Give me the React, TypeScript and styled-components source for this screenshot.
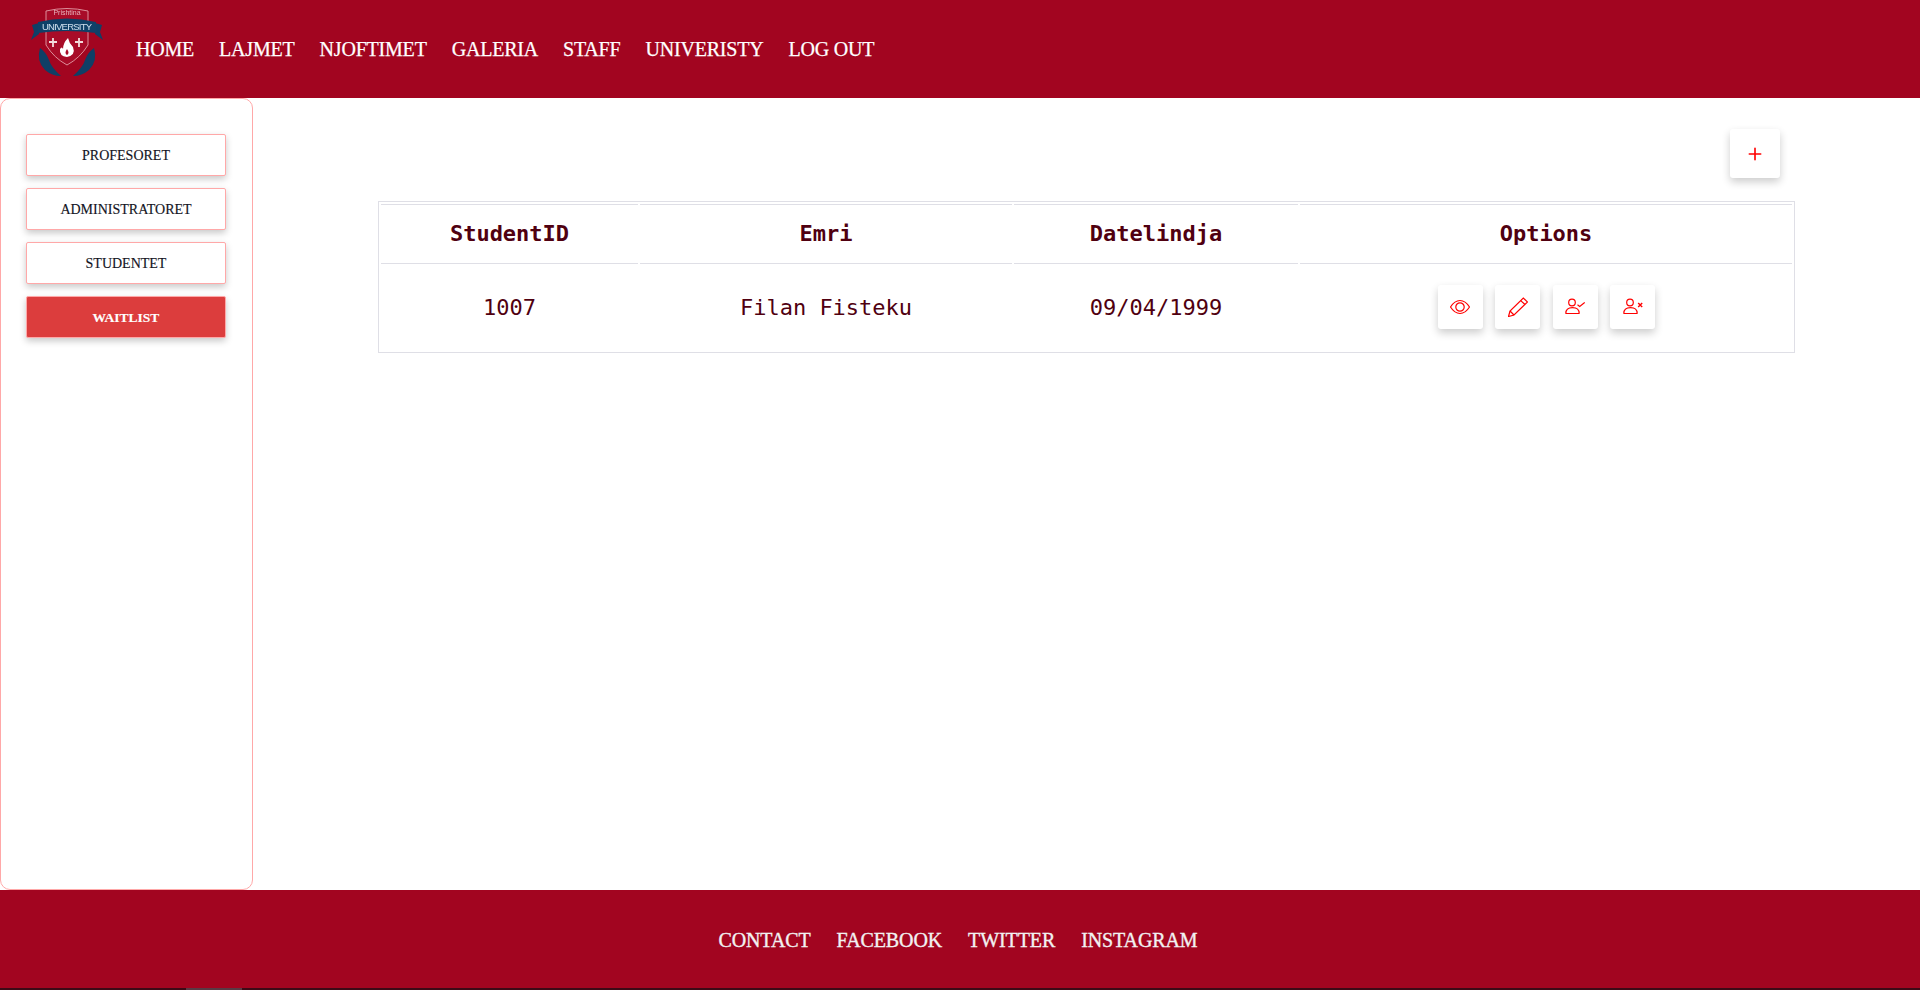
import * as React from 'react'

import styled, { createGlobalStyle } from 'styled-components'
import { BsPlus } from 'react-icons/bs'

const GlobalStyle = createGlobalStyle`
  html, body {
    margin: 0;
    padding: 0;
    height: 100%;
    background: #fff;
    overflow: hidden;
  }
`

const Page = styled.div`
  width: 1920px;
  height: 990px;
  display: flex;
  flex-direction: column;
  font-family: 'Liberation Serif', serif;
`

const Header = styled.header`
  height: 98px;
  background: #a20520;
  display: flex;
  align-items: center;
  padding-left: 28px;
`

const Logo = styled.svg`
  width: 76px;
  height: 78px;
  margin-right: 32px;
  margin-top: -10px;
  flex: none;
  filter: blur(0.3px);
`

const Nav = styled.nav`
  display: flex;
  gap: 25px;
`

const NavLink = styled.a`
  color: #fff;
  font-size: 20px;
  line-height: 30px;
  letter-spacing: -0.2px;
  white-space: nowrap;
  -webkit-text-stroke: 0.25px currentColor;
`

const Middle = styled.div`
  height: 792px;
  display: flex;
`

const Sidebar = styled.aside`
  width: 253px;
  box-sizing: border-box;
  flex: none;
  border: 1px solid #ffa8a8;
  border-radius: 10px;
  padding: 35px 25px 0;
  display: flex;
  flex-direction: column;
  gap: 12px;
`

const SideButton = styled.button<{ $active?: boolean }>`
  width: 200px;
  height: 42px;
  box-sizing: border-box;
  border: 1px solid #ffa8a8;
  border-radius: 2px;
  background: ${p => (p.$active ? '#dc3d3d' : '#fff')};
  color: ${p => (p.$active ? '#fff' : '#14141e')};
  font-family: inherit;
  font-size: ${p => (p.$active ? 13.5 : 14)}px;
  font-weight: ${p => (p.$active ? 700 : 400)};
  box-shadow: 0 3px 7px rgba(0, 0, 0, 0.22);
  padding: 2px 0 0;
  -webkit-text-stroke: 0.15px currentColor;
`

const Main = styled.main`
  flex: 1;
  padding: 31px 125px 0;
`

const Toolbar = styled.div`
  display: flex;
  justify-content: flex-end;
  padding-right: 15px;
  margin-bottom: 23px;
`

const IconButton = styled.button<{ $large?: boolean }>`
  width: ${p => (p.$large ? 50 : 45)}px;
  height: ${p => (p.$large ? 49 : 44)}px;
  border: 0;
  border-radius: 3px;
  background: #fff;
  color: #ff0000;
  display: flex;
  align-items: center;
  justify-content: center;
  padding: 0;
  box-shadow: 0 4px 9px rgba(0, 0, 0, 0.2);
`

const Table = styled.table`
  width: 100%;
  table-layout: fixed;
  border: 1px solid #dfdfe6;
  border-collapse: separate;
  border-spacing: 2px;
  font-family: 'DejaVu Sans Mono', monospace;
  font-size: 22px;
  color: #500010;
`

const HeadCell = styled.th`
  height: 60px;
  box-sizing: border-box;
  padding: 0 0 2px;
  border-top: 1px solid #dfdfe6;
  border-bottom: 1px solid #dfdfe6;
  text-align: center;
  font-weight: 700;
`

const Cell = styled.td`
  height: 84px;
  box-sizing: border-box;
  padding: 0 0 2px;
  text-align: center;
`

const Actions = styled.div`
  display: flex;
  justify-content: center;
  gap: 12.5px;
  margin-left: 1px;
`

const Footer = styled.footer`
  height: 98px;
  background: #a20520;
  display: flex;
  justify-content: center;
  gap: 26px;
  padding: 35px 4px 0 0;
  box-sizing: border-box;
`

const FooterLink = styled(NavLink)`
  color: #f2f2f2;
  letter-spacing: -0.1px;
  -webkit-text-stroke: 0.35px currentColor;
`

const Strip = styled.div`
  height: 2px;
  background: #3d0a16;
  padding-left: 186px;
`

const StripThumb = styled.div`
  width: 56px;
  height: 2px;
  background: #5a3a44;
`

const LineIcon = styled.svg`
  width: 20px;
  height: 20px;
  fill: none;
  stroke: currentColor;
  stroke-width: 1.2;
`

const navItems = ['HOME', 'LAJMET', 'NJOFTIMET', 'GALERIA', 'STAFF', 'UNIVERISTY', 'LOG OUT']
const footerItems = ['CONTACT', 'FACEBOOK', 'TWITTER', 'INSTAGRAM']
const sideItems = ['PROFESORET', 'ADMINISTRATORET', 'STUDENTET', 'WAITLIST']

function UniversityLogo() {
  return (
    <Logo viewBox="0 0 76 78">
      <path d="M18 6 Q39 1 60 6 L60 40 Q52 53 39 60 Q26 53 18 40 Z" fill="#a80c28" stroke="#dc8f9a" strokeWidth="1" />
      <text x="39" y="10" textAnchor="middle" fontFamily="Liberation Sans, sans-serif" fontSize="7" fill="#e8b4bc">
        Prishtina
      </text>
      <path d="M4 20 L11 18 L11 29 L3 35 L6 27 Z" fill="#0f3f66" />
      <path d="M74 20 L67 18 L67 29 L75 35 L72 27 Z" fill="#0f3f66" />
      <path d="M10 17 Q39 10 68 17 L68 28 Q39 24 10 28 Z" fill="#0f4168" />
      <text x="39" y="24.5" textAnchor="middle" fontFamily="Liberation Sans, sans-serif" fontSize="9.5" textLength="50" fill="#cfe0ee">
        UNIVERSITY
      </text>
      <path d="M25 33 v9 M21 37 h8 M51 33 v9 M47 37 h8" stroke="#f3dcdc" strokeWidth="1.8" />
      <path d="M40 33 Q41 38 45 42 Q48 50 39 52 Q31 51 32 44 Q34 41 35 44 Q35 38 40 33 Z M39 44 Q36 48 39 50 Q42 48 39 44 Z" fill="#fff" fillRule="evenodd" />
      <path d="M12 43 Q8 56 17 65 Q24 71 33 71 Q23 62 21 55 Q18 47 12 43 Z" fill="#0f3f66" />
      <path d="M66 43 Q70 56 61 65 Q54 71 45 71 Q55 62 57 55 Q60 47 66 43 Z" fill="#0f3f66" />
    </Logo>
  )
}

function EyeIcon() {
  return (
    <LineIcon viewBox="0 0 20 20">
      <path d="M.5 10 C4 4.5 7 3.5 10 3.5 S16 4.5 19.5 10 C16 15.5 13 16.5 10 16.5 S4 15.5 .5 10 Z" />
      <circle cx="10" cy="10" r="4.2" />
    </LineIcon>
  )
}

function PencilIcon() {
  return (
    <LineIcon viewBox="0 0 20 20">
      <path d="M.5 19.5 L2 14 L15.3 1 L19.5 5 L6 18 Z" />
      <path d="M2 14 L6 18 M12.7 3.6 L17 7.5" />
    </LineIcon>
  )
}

function PersonBase() {
  return (
    <>
      <circle cx="7" cy="5.5" r="3.3" />
      <path d="M.5 16.5 H14.5 M.8 16.5 C.8 12 3.5 10.6 7.5 10.6 S14.2 12 14.2 16.5" />
    </>
  )
}

function PersonCheckIcon() {
  return (
    <LineIcon viewBox="0 0 20 20">
      <PersonBase />
      <path d="M12.5 7.8 L14.7 9.4 L19.7 5.4" />
    </LineIcon>
  )
}

function PersonCrossIcon() {
  return (
    <LineIcon viewBox="0 0 20 20">
      <PersonBase />
      <path d="M15.2 6 L19.2 10 M19.2 6 L15.2 10" strokeWidth="1.4" />
    </LineIcon>
  )
}

export default function App() {
  return (
    <Page>
      <GlobalStyle />
      <Header>
        <UniversityLogo />
        <Nav>
          {navItems.map(item => (
            <NavLink key={item}>{item}</NavLink>
          ))}
        </Nav>
      </Header>

      <Middle>
        <Sidebar>
          {sideItems.map(item => (
            <SideButton key={item} $active={item === 'WAITLIST'}>
              {item}
            </SideButton>
          ))}
        </Sidebar>

        <Main>
          <Toolbar>
            <IconButton $large>
              <BsPlus size={26} />
            </IconButton>
          </Toolbar>

          <Table>
            <colgroup>
              <col style={{ width: 257 }} />
              <col style={{ width: 372 }} />
              <col style={{ width: 284 }} />
              <col />
            </colgroup>
            <thead>
              <tr>
                <HeadCell>StudentID</HeadCell>
                <HeadCell>Emri</HeadCell>
                <HeadCell>Datelindja</HeadCell>
                <HeadCell>Options</HeadCell>
              </tr>
            </thead>
            <tbody>
              <tr>
                <Cell>1007</Cell>
                <Cell>Filan Fisteku</Cell>
                <Cell>09/04/1999</Cell>
                <Cell>
                  <Actions>
                    <IconButton><EyeIcon /></IconButton>
                    <IconButton><PencilIcon /></IconButton>
                    <IconButton><PersonCheckIcon /></IconButton>
                    <IconButton><PersonCrossIcon /></IconButton>
                  </Actions>
                </Cell>
              </tr>
            </tbody>
          </Table>
        </Main>
      </Middle>

      <Footer>
        {footerItems.map(item => (
          <FooterLink key={item}>{item}</FooterLink>
        ))}
      </Footer>
      <Strip>
        <StripThumb />
      </Strip>
    </Page>
  )
}
